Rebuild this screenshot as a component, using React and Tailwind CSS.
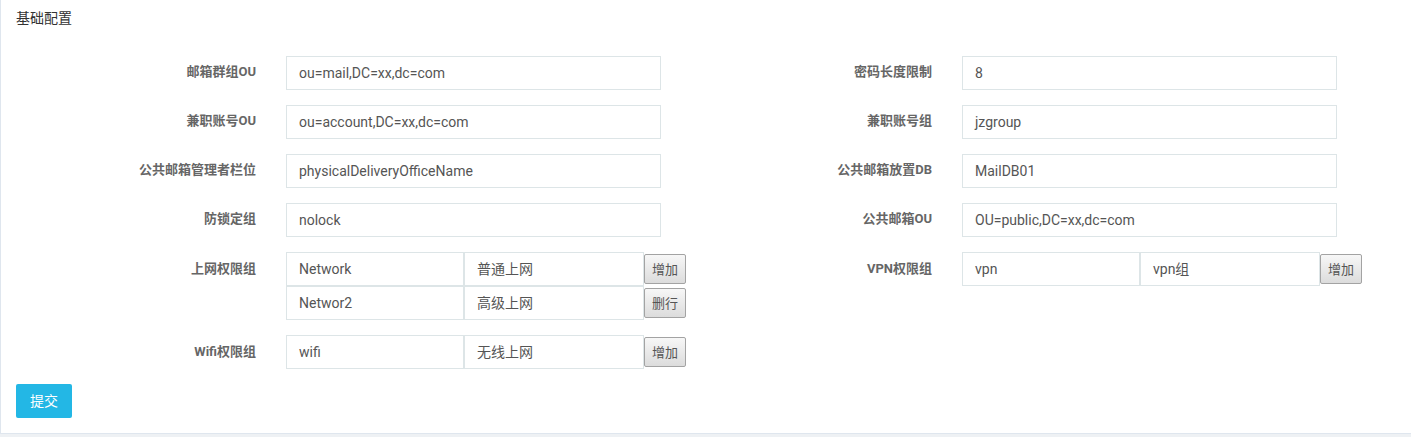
import React from 'react';

const font = { fontFamily: 'Roboto, "Noto Sans CJK SC", sans-serif' };

// 单个输入行
const Field = ({ label, value }) => (
  <div className="flex">
    <label className="w-[240px] shrink-0 pt-[8px] text-right text-[13px] leading-[15px] font-bold text-[#666]">
      {label}
    </label>
    <div className="ml-[30px] flex h-[34px] w-[375px] items-center border border-[#dde5e7] bg-white px-[12px] text-[14px] text-[#555]">
      {value}
    </div>
  </div>
);

const GrayButton = ({ children }) => (
  <button className="mt-[2px] h-[30px] w-[42px] shrink-0 rounded-[2px] border border-[#a3a3a3] bg-gradient-to-b from-[#f7f7f7] to-[#dcdcdc] text-[13px] leading-none text-[#555]">
    {children}
  </button>
);

// 两列组合输入 + 按钮
const PairRow = ({ a, b, action }) => (
  <div className="flex">
    <div className="flex h-[34px] w-[178px] items-center border border-[#dde5e7] bg-white px-[12px] text-[14px] text-[#555]">
      {a}
    </div>
    <div className="flex h-[34px] w-[180px] items-center border border-[#dde5e7] bg-white px-[12px] text-[14px] text-[#555]">
      {b}
    </div>
    <GrayButton>{action}</GrayButton>
  </div>
);

const GroupField = ({ label, rows }) => (
  <div className="flex">
    <label className="w-[240px] shrink-0 pt-[9px] text-right text-[13px] leading-[15px] font-bold text-[#666]">
      {label}
    </label>
    <div className="ml-[30px] flex flex-col">
      {rows.map((r, i) => (
        <PairRow key={i} a={r[0]} b={r[1]} action={r[2]} />
      ))}
    </div>
  </div>
);

export default function App() {
  return (
    <div className="min-h-[437px] bg-[#eef1f4]" style={font}>
      <div className="border-b border-l border-[#dfe6ee] bg-white">
        {/* 标题 */}
        <div className="px-[15px] pt-[9px] text-[14px] leading-[18px] text-[#333]">基础配置</div>

        <div className="mt-[29px] grid grid-cols-[676px_676px] gap-y-[15px] px-[15px]">
          <Field label="邮箱群组OU" value="ou=mail,DC=xx,dc=com" />
          <Field label="密码长度限制" value="8" />
          <Field label="兼职账号OU" value="ou=account,DC=xx,dc=com" />
          <Field label="兼职账号组" value="jzgroup" />
          <Field label="公共邮箱管理者栏位" value="physicalDeliveryOfficeName" />
          <Field label="公共邮箱放置DB" value="MailDB01" />
          <Field label="防锁定组" value="nolock" />
          <Field label="公共邮箱OU" value="OU=public,DC=xx,dc=com" />
          <GroupField
            label="上网权限组"
            rows={[
              ['Network', '普通上网', '增加'],
              ['Networ2', '高级上网', '删行'],
            ]}
          />
          <GroupField label="VPN权限组" rows={[['vpn', 'vpn组', '增加']]} />
          <GroupField label="Wifi权限组" rows={[['wifi', '无线上网', '增加']]} />
          <div />
        </div>

        <div className="px-[15px] pt-[15px] pb-[15px]">
          <button className="h-[34px] w-[56px] rounded-[2px] bg-[#23b7e5] text-[14px] text-white">提交</button>
        </div>
      </div>
    </div>
  );
}
